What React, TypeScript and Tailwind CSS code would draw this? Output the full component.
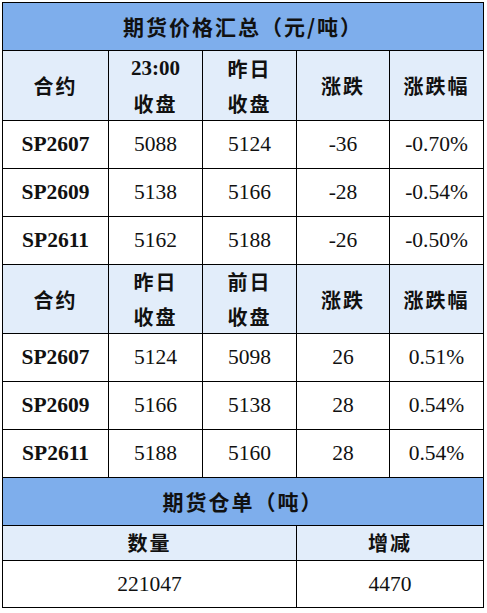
const serif = "font-['Liberation_Serif','Noto_Sans_CJK_SC',serif]"
const cjk = "font-['Noto_Sans_CJK_SC',sans-serif]"

const widths = ["w-[106px]", "w-[94px]", "w-[94px]", "w-[93px]", "w-[94px]"]

const nightRows = [
  ["SP2607", "5088", "5124", "-36", "-0.70%"],
  ["SP2609", "5138", "5166", "-28", "-0.54%"],
  ["SP2611", "5162", "5188", "-26", "-0.50%"],
]

const dayRows = [
  ["SP2607", "5124", "5098", "26", "0.51%"],
  ["SP2609", "5166", "5138", "28", "0.54%"],
  ["SP2611", "5188", "5160", "28", "0.54%"],
]

function HeaderRow({ cols, height }: { cols: string[][]; height: string }) {
  return (
    <div className={`flex ${height} border-b border-black bg-[#e2edfa]`}>
      {cols.map((lines, i) => (
        <div
          key={i}
          className={`${widths[i]} shrink-0 border-r border-black flex flex-col items-center justify-center text-[20px] leading-[35px] font-bold text-[#111] tracking-[2px] ${cjk}`}
        >
          {lines.map((l, j) => (
            <span key={j} className={l === "23:00" ? `${serif} tracking-normal text-[21px]` : ""}>
              {l}
            </span>
          ))}
        </div>
      ))}
    </div>
  )
}

function DataRow({ row }: { row: string[] }) {
  return (
    <div className="flex h-[48px] border-b border-black bg-white">
      {row.map((v, i) => (
        <div
          key={i}
          className={`${widths[i]} shrink-0 border-r border-black flex items-center justify-center text-[21.5px] text-[#111] ${serif} ${i === 0 ? "font-bold" : ""}`}
        >
          {v}
        </div>
      ))}
    </div>
  )
}

export default function App() {
  return (
    <div className="w-[487px] h-[613px] bg-white pt-[2px] pl-[2px]">
      <div className="w-[482px] border-l border-t border-black">
        {/* 期货价格 */}
        <div className={`h-[48px] border-b border-r border-black bg-[#7eaeec] flex items-center justify-center text-[21px] font-bold text-[#111] tracking-[2px] ${cjk}`}>
          期货价格汇总（元/吨）
        </div>
        <HeaderRow
          height="h-[70px]"
          cols={[["合约"], ["23:00", "收盘"], ["昨日", "收盘"], ["涨跌"], ["涨跌幅"]]}
        />
        {nightRows.map((r) => (
          <DataRow key={r[0]} row={r} />
        ))}
        <HeaderRow
          height="h-[69px]"
          cols={[["合约"], ["昨日", "收盘"], ["前日", "收盘"], ["涨跌"], ["涨跌幅"]]}
        />
        {dayRows.map((r) => (
          <DataRow key={r[0]} row={r} />
        ))}

        {/* 仓单 */}
        <div className={`h-[48px] border-b border-r border-black bg-[#7eaeec] flex items-center justify-center text-[21px] font-bold text-[#111] tracking-[2px] ${cjk}`}>
          期货仓单（吨）
        </div>
        <div className={`flex h-[35px] border-b border-black bg-[#e2edfa] text-[20px] font-bold text-[#111] tracking-[2px] ${cjk}`}>
          <div className="w-[294px] border-r border-black flex items-center justify-center">数量</div>
          <div className="w-[187px] border-r border-black flex items-center justify-center">增减</div>
        </div>
        <div className={`flex h-[47px] border-b border-black text-[21.5px] text-[#111] ${serif}`}>
          <div className="w-[294px] border-r border-black flex items-center justify-center">221047</div>
          <div className="w-[187px] border-r border-black flex items-center justify-center">4470</div>
        </div>
      </div>
    </div>
  )
}
